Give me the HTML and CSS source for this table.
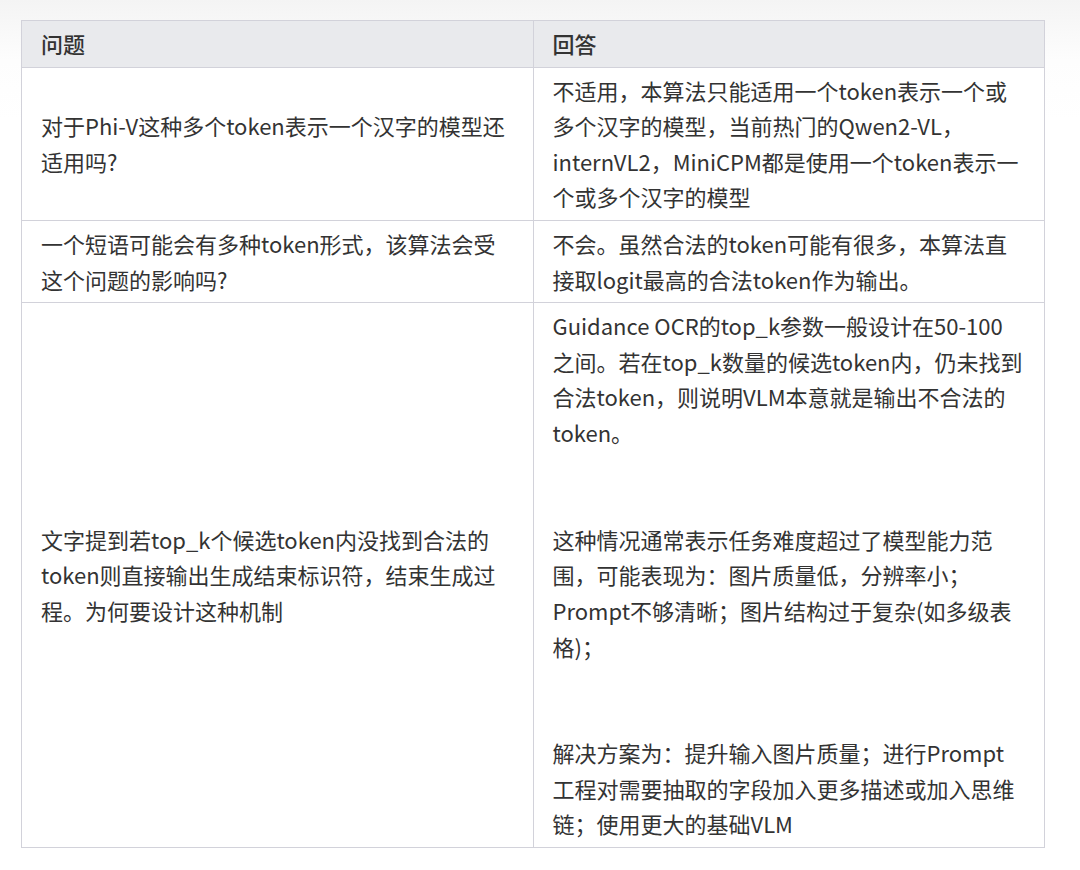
FILE: index.html
```html
<!DOCTYPE html>
<html lang="zh-CN">
<head>
<meta charset="utf-8">
<link rel="stylesheet" href="styles.css">
</head>
<body>
<div class="page">
<table class="qa">
<thead>
<tr><th>问题</th><th>回答</th></tr>
</thead>
<tbody>
<tr>
<td>对于Phi-V这种多个token表示一个汉字的模型还<br>适用吗?</td>
<td>不适用，本算法只能适用一个token表示一个或<br>多个汉字的模型，当前热门的Qwen2-VL，<br>internVL2，MiniCPM都是使用一个token表示一<br>个或多个汉字的模型</td>
</tr>
<tr>
<td>一个短语可能会有多种token形式，该算法会受<br>这个问题的影响吗?</td>
<td>不会。虽然合法的token可能有很多，本算法直<br>接取logit最高的合法token作为输出。</td>
</tr>
<tr>
<td>文字提到若top_k个候选token内没找到合法的<br>token则直接输出生成结束标识符，结束生成过<br>程。为何要设计这种机制</td>
<td>Guidance OCR的top_k参数一般设计在50-100<br>之间。若在top_k数量的候选token内，仍未找到<br>合法token，则说明VLM本意就是输出不合法的<br>token。<br><br><br>这种情况通常表示任务难度超过了模型能力范<br>围，可能表现为：图片质量低，分辨率小；<br>Prompt不够清晰；图片结构过于复杂(如多级表<br>格)；<br><br><br>解决方案为：提升输入图片质量；进行Prompt<br>工程对需要抽取的字段加入更多描述或加入思维<br>链；使用更大的基础VLM</td>
</tr>
</tbody>
</table>
</div>
</body>
</html>
```
FILE: styles.css
```css
html, body {
  margin: 0;
  padding: 0;
}
body {
  background: linear-gradient(to bottom, #f4f4f4 0px, #fdfdfd 60px, #ffffff 120px);
  font-family: "PingFang SC", "Noto Sans CJK SC", "Noto Sans", sans-serif;
  color: #333;
  width: 1080px;
  height: 870px;
}
.page {
  padding: 20px 35px 0 21px;
}
.qa {
  width: 1024px;
  border-collapse: collapse;
  table-layout: fixed;
  background: #fff;
  font-size: 22px;
  line-height: 35.6px;
}
.qa th, .qa td {
  border: 1px solid #d2d2da;
  padding: 5px 19px 5px 19px;
  text-align: left;
  vertical-align: middle;
  white-space: nowrap;
}
.qa th {
  background: #e9eaed;
  font-weight: 500;
  color: #333;
}
.qa td {
  font-weight: 400;
}
```
